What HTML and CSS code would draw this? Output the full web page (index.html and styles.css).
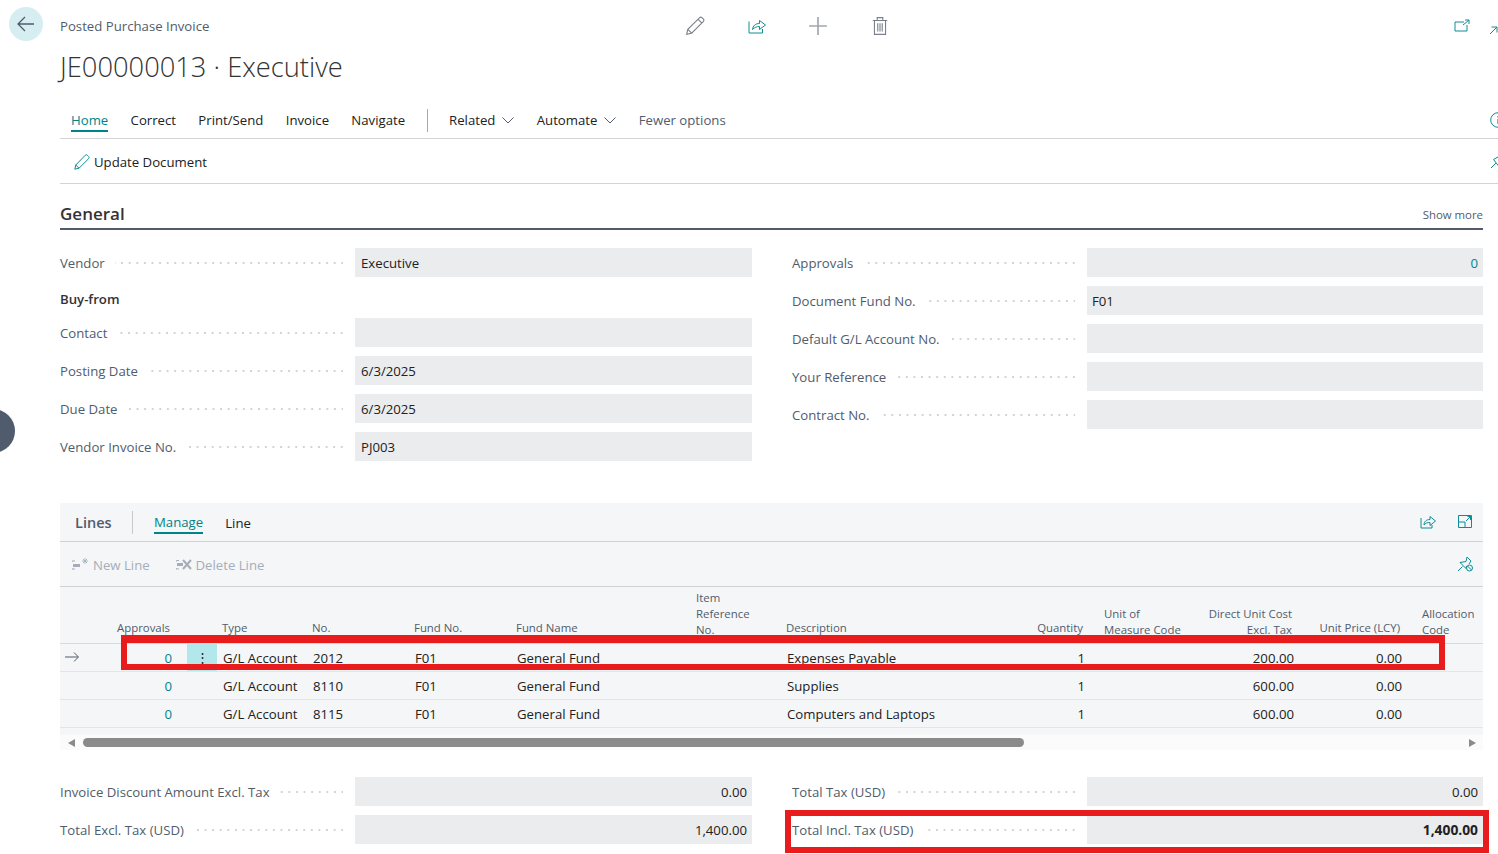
FILE: index.html
```html
<!DOCTYPE html>
<html lang="en">
<head>
<meta charset="utf-8">
<title>Posted Purchase Invoice</title>
<link rel="stylesheet" href="styles.css">
</head>
<body>
<div class="page">
  <button class="back" aria-label="Back">
    <svg width="18" height="16" viewBox="0 0 18 16"><path d="M8 1 1 8l7 7M1 8h16" fill="none" stroke="#505c6d" stroke-width="1.3"/></svg>
  </button>
  <div class="side-tab"></div>

  <header class="top">
    <div class="crumb">Posted Purchase Invoice</div>
    <div class="top-icons">
      <svg class="ic" viewBox="0 0 18 18"><path d="M1.500 16.500l1-4.500L13 1.600a1.700 1.700 0 0 1 2.400 0l1 1a1.700 1.700 0 0 1 0 2.400L6 15.500zM2.500 12 6 15.500M11.800 3l3.200 3.200" fill="none" stroke="#7b818c" stroke-width="1"/></svg>
      <svg class="ic" viewBox="0 0 20 20"><path d="M2 5.500V17h13.500v-4" fill="none" stroke="#0f8c93" stroke-width="1"/><path d="M5.500 13.500c.3-3.700 3-6 7-6V4.500L18.500 9l-6 4.500v-3c-3 0-5 1-7 3z" fill="none" stroke="#0f8c93" stroke-width="1"/></svg>
      <svg class="ic" viewBox="0 0 18 18"><path d="M9 1v16M1 9h16" fill="none" stroke="#a2a6ae" stroke-width="1.500"/></svg>
      <svg class="ic" viewBox="0 0 18 18"><path d="M2.500 4h13M6.500 4V1.500h5V4M4 4v12.500h10V4M7 6.500v7.500M9 6.500v7.500M11 6.500v7.500" fill="none" stroke="#7b818c" stroke-width="1"/></svg>
    </div>
    <div class="top-right">
      <svg class="ic-box" viewBox="0 0 16 13"><path d="M10 3H1v9h12V6M9 6l6-5M11 1h4v4" fill="none" stroke="#0f8c93" stroke-width="1"/></svg>
      <svg class="ic-arrow" viewBox="0 0 9 9"><path d="M1 8l7-7M2.500 1H8v5.500" fill="none" stroke="#0f8c93" stroke-width="1"/></svg>
    </div>
  </header>

  <h1 class="title">JE00000013 · Executive</h1>

  <nav class="nav">
    <a class="tab tab-on">Home</a>
    <a class="tab">Correct</a>
    <a class="tab">Print/Send</a>
    <a class="tab">Invoice</a>
    <a class="tab">Navigate</a>
    <span class="nav-sep"></span>
    <a class="tab">Related <svg class="chev" viewBox="0 0 12 7"><path d="M.5.500 6 6l5.500-5.500" fill="none" stroke="#505c6d"/></svg></a>
    <a class="tab">Automate <svg class="chev" viewBox="0 0 12 7"><path d="M.5.500 6 6l5.500-5.500" fill="none" stroke="#505c6d"/></svg></a>
    <a class="tab tab-muted">Fewer options</a>
    <svg class="info" viewBox="0 0 16 16"><circle cx="8" cy="8" r="7.300" fill="none" stroke="#0f8c93"/><path d="M8 7v5M8 4v1.500" stroke="#0f8c93" stroke-width="1.200"/></svg>
  </nav>

  <div class="cmd">
    <svg class="cmd-pen" viewBox="0 0 16 16"><path d="M.8 15.200l1-4.200L11.200 1.300a1.500 1.500 0 0 1 2.200 0l1.200 1.200a1.500 1.500 0 0 1 0 2.200L5 14.200zM1.800 11 5 14.200" fill="none" stroke="#0f8c93" stroke-width="1"/></svg>
    <span>Update Document</span>
    <svg class="cmd-pin" viewBox="0 0 14 14"><path d="M1 13l5-5M3.500 4.500 8 2l4 5-3 4.500-5.500-7zM8 2l5 0" fill="none" stroke="#0f8c93" stroke-width="1"/></svg>
  </div>

  <main class="content">
    <div class="section-head">
      <h2 class="section-title">General</h2>
      <span class="show-more">Show more</span>
    </div>

    <section class="cols">
      <div class="col">
        <div class="row"><div class="lab"><span>Vendor</span><i class="dots"></i></div><div class="val">Executive</div></div>
        <div class="group">Buy-from</div>
        <div class="row"><div class="lab"><span>Contact</span><i class="dots"></i></div><div class="val"></div></div>
        <div class="row"><div class="lab"><span>Posting Date</span><i class="dots"></i></div><div class="val">6/3/2025</div></div>
        <div class="row"><div class="lab"><span>Due Date</span><i class="dots"></i></div><div class="val">6/3/2025</div></div>
        <div class="row"><div class="lab"><span>Vendor Invoice No.</span><i class="dots"></i></div><div class="val">PJ003</div></div>
      </div>
      <div class="col">
        <div class="row"><div class="lab"><span>Approvals</span><i class="dots"></i></div><div class="val num link">0</div></div>
        <div class="row"><div class="lab"><span>Document Fund No.</span><i class="dots"></i></div><div class="val">F01</div></div>
        <div class="row"><div class="lab"><span>Default G/L Account No.</span><i class="dots"></i></div><div class="val"></div></div>
        <div class="row"><div class="lab"><span>Your Reference</span><i class="dots"></i></div><div class="val"></div></div>
        <div class="row"><div class="lab"><span>Contract No.</span><i class="dots"></i></div><div class="val"></div></div>
      </div>
    </section>

    <section class="panel">
      <div class="panel-bar">
        <span class="panel-title">Lines</span>
        <span class="panel-sep"></span>
        <a class="ptab ptab-on">Manage</a>
        <a class="ptab">Line</a>
        <div class="panel-icons">
          <svg class="pi" viewBox="0 0 16 15"><path d="M1 4v10h11v-3" fill="none" stroke="#0f8c93" stroke-width="1"/><path d="M4 11c0-3.500 2.500-5.500 6-5.500V2.500L15.500 7 10 11.500v-3C7.500 8.500 5.500 9 4 11z" fill="none" stroke="#0f8c93" stroke-width="1"/></svg>
          <svg class="pi" viewBox="0 0 16 15"><path d="M1.500 1.500h13v12h-13zM1.500 8H8v5.500M9 7l4.500-4.500M10.500 2.500h3V6" fill="none" stroke="#0f8c93" stroke-width="1"/></svg>
        </div>
      </div>
      <div class="panel-actions">
        <span class="act act-new">
          <svg class="act-ic" viewBox="0 0 17 14"><path d="M3 3H0v1M0 10v1h3" fill="none" stroke="#a6adb8"/><path d="M1 6h7v3H1z" fill="#a6adb8"/><path d="M13 0v6M10 3h6M11 1l4 4M15 1l-4 4" stroke="#a6adb8" stroke-width=".8"/></svg>
          New Line
        </span>
        <span class="act act-del">
          <svg class="act-ic" viewBox="0 0 16 14"><path d="M3 2.500H.5v1M.5 10v1H3" fill="none" stroke="#a6adb8"/><path d="M1 5h6v3H1z" fill="#a6adb8"/><path d="M7 2l8 9M15 2l-8 9" stroke="#a6adb8" stroke-width="2"/></svg>
          Delete Line
        </span>
        <svg class="act-pin" viewBox="0 0 16 16"><path d="M1 15l4.500-4.500M3 6.500l6-1L10 1l4 4-2 3M3 6.500l6 6 .5-2.500" fill="none" stroke="#0f8c93" stroke-width="1"/><circle cx="12.500" cy="12" r="3" fill="none" stroke="#0f8c93" stroke-width="1"/><path d="M10.500 10l4 4" stroke="#0f8c93"/></svg>
      </div>

      <div class="grid head">
        <div></div>
        <div class="h one">Approvals</div>
        <div></div>
        <div class="h one">Type</div>
        <div class="h one">No.</div>
        <div class="h one">Fund No.</div>
        <div class="h one">Fund Name</div>
        <div class="h">Item<br>Reference<br>No.</div>
        <div class="h one">Description</div>
        <div class="h one right">Quantity</div>
        <div class="h">Unit of<br>Measure Code</div>
        <div class="h right">Direct Unit Cost<br>Excl. Tax</div>
        <div class="h one right">Unit Price (LCY)</div>
        <div class="h">Allocation<br>Code</div>
      </div>

      <div class="grid line">
        <div class="arrow-cell"><svg width="14" height="10" viewBox="0 0 14 10"><path d="M9 .5 13.500 5 9 9.500M0 5h13" fill="none" stroke="#505c6d"/></svg></div>
        <div class="c-num link">0</div>
        <div class="menu">⋮</div>
        <div class="c">G/L Account</div><div class="c">2012</div><div class="c">F01</div><div class="c">General Fund</div><div class="c"></div><div class="c">Expenses Payable</div><div class="c-r">1</div><div class="c"></div><div class="c-r">200.00</div><div class="c-r">0.00</div><div></div>
      </div>
      <div class="grid line">
        <div></div>
        <div class="c-num link">0</div>
        <div></div>
        <div class="c">G/L Account</div><div class="c">8110</div><div class="c">F01</div><div class="c">General Fund</div><div class="c"></div><div class="c">Supplies</div><div class="c-r">1</div><div class="c"></div><div class="c-r">600.00</div><div class="c-r">0.00</div><div></div>
      </div>
      <div class="grid line">
        <div></div>
        <div class="c-num link">0</div>
        <div></div>
        <div class="c">G/L Account</div><div class="c">8115</div><div class="c">F01</div><div class="c">General Fund</div><div class="c"></div><div class="c">Computers and Laptops</div><div class="c-r">1</div><div class="c"></div><div class="c-r">600.00</div><div class="c-r">0.00</div><div></div>
      </div>
    </section>

    <div class="scrollbar">
      <span class="tri tri-l"></span>
      <div class="track"><div class="thumb"></div></div>
      <span class="tri tri-r"></span>
    </div>

    <section class="cols totals">
      <div class="col">
        <div class="row"><div class="lab"><span>Invoice Discount Amount Excl. Tax</span><i class="dots"></i></div><div class="val num">0.00</div></div>
        <div class="row"><div class="lab"><span>Total Excl. Tax (USD)</span><i class="dots"></i></div><div class="val num">1,400.00</div></div>
      </div>
      <div class="col">
        <div class="row"><div class="lab"><span>Total Tax (USD)</span><i class="dots"></i></div><div class="val num">0.00</div></div>
        <div class="row"><div class="lab"><span>Total Incl. Tax (USD)</span><i class="dots"></i></div><div class="val num strong">1,400.00</div></div>
      </div>
    </section>
  </main>

  <div class="mark mark-row"></div>
  <div class="mark mark-total"></div>
</div>
</body>
</html>
```
FILE: styles.css
```css
* { box-sizing: border-box; }
html, body { margin: 0; padding: 0; background: #fff; }
body { font-family: "Open Sans", "Noto Sans", sans-serif; font-size: 13.2px; color: #212121; }
.page { position: relative; width: 1498px; height: 854px; overflow: hidden; background: #fff; }

.back { position: absolute; left: 9px; top: 7px; width: 34px; height: 34px; border: 0; border-radius: 50%; background: #d6eef1; padding: 0; display: flex; align-items: center; justify-content: center; }
.side-tab { position: absolute; left: -29px; top: 409px; width: 44px; height: 44px; border-radius: 50%; background: #505c6d; }

.top { display: flex; align-items: center; height: 52px; padding-left: 60px; }
.crumb { width: 625px; color: #505c6d; }
.top-icons { display: flex; gap: 41.6px; }
.ic { width: 20px; height: 20px; display: block; }
.top-right { display: flex; align-items: center; gap: 19px; margin-left: auto; }
.ic-box { width: 16px; height: 13px; margin-top: -2px; }
.ic-arrow { width: 9px; height: 9px; margin-top: 8px; }

.title { margin: 0 0 0 60px; height: 30px; font-size: 27.3px; line-height: 30px; font-weight: 300; color: #333; }

.nav { display: flex; align-items: center; gap: 22.3px; height: 37px; margin: 20px 0 0 60px; padding-left: 11px; border-bottom: 1px solid #d4d4d4; position: relative; }
.tab { display: flex; align-items: center; gap: 6px; color: #212121; white-space: nowrap; height: 24px; }
.tab-on { color: #00848a; border-bottom: 2px solid #00848a; height: 22px; align-self: flex-end; margin-bottom: 6px; align-items: flex-start; line-height: 20px; }
.tab-muted { color: #505c6d; }
.nav-sep { width: 1px; height: 23px; margin-right: -1.7px; background: #a8a8a8; }
.chev { width: 12px; height: 7px; margin-left: 1px; }
.info { width: 16px; height: 16px; margin-left: auto; margin-right: -8px; }

.cmd { display: flex; align-items: center; height: 45px; margin-left: 60px; padding: 1px 0 0 14px; border-bottom: 1px solid #d4d4d4; gap: 4px; }
.cmd-pen { width: 16px; height: 16px; }
.cmd-pin { width: 14px; height: 14px; margin-left: auto; margin-right: -6px; }

.content { padding: 0 15px 0 60px; }
.section-head { display: flex; justify-content: space-between; align-items: flex-end; height: 46px; padding-bottom: 3px; border-bottom: 2px solid #505c6d; }
.section-title { margin: 0; font-size: 17px; font-weight: 600; line-height: 22px; color: #333; }
.show-more { font-size: 11.4px; color: #505c6d; line-height: 20px; }

.cols { display: grid; grid-template-columns: 692px 691px; column-gap: 40px; margin-top: 18px; }
.col { display: flex; flex-direction: column; gap: 9px; }
.row { display: flex; height: 29px; }
.lab { display: flex; align-items: center; width: 295px; padding-right: 12px; color: #505c6d; white-space: nowrap; }
.dots { flex: 1; height: 2px; margin-left: 10px; background-image: radial-gradient(circle at 6.6px 1px, #d0d3d7 1px, transparent 1.100px); background-size: 7.600px 2px; background-repeat: repeat-x; background-position: right; }
.val { flex: 1; display: flex; align-items: center; padding: 0 5px 0 6px; background: #ebecee; color: #212121; }
.col + .col .val { padding-left: 5px; }
.num { justify-content: flex-end; }
.link { color: #00848a; }
.val.strong { font-weight: 700; font-size: 13.8px; }
.group { height: 23px; padding-top: 3px; font-weight: 600; line-height: 20px; color: #333; }

.panel { margin-top: 42px; height: 232px; background: #f5f6f8; }
.panel-bar { display: flex; align-items: center; height: 39px; padding: 1px 0 0 15px; border-bottom: 1px solid #cfd1d3; }
.panel-title { font-size: 14.5px; font-weight: 600; color: #505c6d; width: 37px; white-space: nowrap; }
.panel-sep { width: 1px; height: 23px; margin: 0 21px 0 20px; background: #c8c8c8; }
.ptab { margin-right: 22px; color: #212121; }
.ptab-on { color: #00848a; border-bottom: 2px solid #00848a; line-height: 18px; height: 21px; margin-top: 1px; }
.panel-icons { display: flex; gap: 21px; margin-left: auto; padding-right: 10px; margin-top: -2px; }
.pi { width: 16px; height: 15px; }

.panel-actions { display: flex; align-items: center; height: 45px; padding: 1px 0 0 12px; border-bottom: 1px solid #cfd1d3; color: #a6adb8; }
.act { display: flex; align-items: center; gap: 4px; }
.act-new { width: 103.500px; }
.act-ic { width: 17px; height: 14px; }
.act-del .act-ic { width: 16px; }
.act-pin { width: 16px; height: 16px; margin-left: auto; margin-right: 10px; margin-top: -1px; }

.grid { display: grid; grid-template-columns: 57px 70px 30px 90px 102px 102px 180px 90px 251px 56px 111px 98px 108px 78px; }
.head { height: 57px; border-bottom: 1px solid #d9dadc; align-items: end; padding-bottom: 5px; }
.h { font-size: 11.4px; line-height: 16px; color: #505c6d; padding-left: 5px; white-space: nowrap; }
.head > .h:nth-child(2) { padding-left: 0; }
.head > .h:nth-child(11) { padding-left: 16px; }
.head > .h:nth-child(14) { padding-left: 17px; }
.one { padding-bottom: 2px; }
.right { text-align: right; padding-left: 0; padding-right: 5px; }
.line { height: 28px; align-items: center; border-bottom: 1px solid #e4e5e7; }
.arrow-cell { padding-left: 5px; display: flex; align-items: center; height: 27px; margin-top: -1px; }
.c { padding-left: 6px; white-space: nowrap; }
.c-r { text-align: right; padding-right: 3px; }
.c-num { text-align: right; padding-right: 15px; }
.menu { height: 27px; background: #b2e8eb; text-align: center; line-height: 26px; color: #212121; }

.scrollbar { display: flex; align-items: center; height: 15px; background: #fbfbfc; padding: 0 7px 0 8px; }
.tri { width: 0; height: 0; border-top: 4px solid transparent; border-bottom: 4px solid transparent; }
.tri-l { border-right: 7px solid #8a8a8a; }
.tri-r { border-left: 7px solid #8a8a8a; }
.track { flex: 1; padding: 0 8px; }
.thumb { width: 941px; height: 9px; border-radius: 5px; background: #8a8a8a; }

.totals { margin-top: 27px; }

.mark { position: absolute; border: 6px solid #e81c1c; pointer-events: none; }
.mark-row { left: 121px; top: 635px; width: 1324px; height: 35px; border-top-width: 8px; }
.mark-total { left: 785px; top: 810px; width: 704px; height: 43px; }
```
